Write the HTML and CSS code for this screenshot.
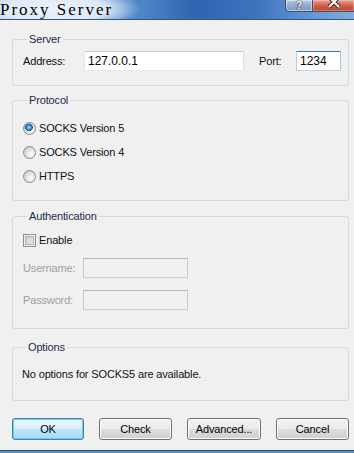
FILE: index.html
```html
<!DOCTYPE html>
<html lang="en">
<head>
    <meta charset="UTF-8">
    <title>Proxy Server</title>
    <link rel="stylesheet" href="styles.css">
</head>
<body>
<div class="window">
    <div class="titlebar">
        <span class="title">Proxy Server</span>
        <div class="caption">
            <span class="cap-btn cap-help">?</span>
            <span class="cap-btn cap-close">
                <svg width="14" height="10" viewBox="0 0 14 10">
                    <path d="M2 -3 L7 2 L12 -3 M2 7 L7 2 L12 7" stroke="#3a1c18" stroke-width="4" fill="none"/>
                    <path d="M2 -3 L7 2 L12 -3 M2 7 L7 2 L12 7" stroke="#fff" stroke-width="2.2" fill="none"/>
                </svg>
            </span>
        </div>
    </div>

    <div class="content">
        <fieldset class="group group-server">
            <legend>Server</legend>
            <div class="row">
                <label class="lbl lbl-address">Address:</label>
                <input class="text text-address" value="127.0.0.1">
                <label class="lbl lbl-port">Port:</label>
                <input class="text text-port" value="1234">
            </div>
        </fieldset>

        <fieldset class="group group-protocol">
            <legend>Protocol</legend>
            <label class="choice"><input type="radio" name="proto" class="radio" checked><span>SOCKS Version 5</span></label>
            <label class="choice"><input type="radio" name="proto" class="radio"><span>SOCKS Version 4</span></label>
            <label class="choice"><input type="radio" name="proto" class="radio"><span>HTTPS</span></label>
        </fieldset>

        <fieldset class="group group-auth">
            <legend>Authentication</legend>
            <label class="choice choice-check"><input type="checkbox" class="check"><span>Enable</span></label>
            <div class="row row-user">
                <label class="lbl lbl-off">Username:</label>
                <input class="text text-off" disabled>
            </div>
            <div class="row row-pass">
                <label class="lbl lbl-off">Password:</label>
                <input class="text text-off" type="password" disabled>
            </div>
        </fieldset>

        <fieldset class="group group-options">
            <legend>Options</legend>
            <p class="note">No options for SOCKS5 are available.</p>
        </fieldset>

        <div class="buttons">
            <button class="btn btn-ok">OK</button>
            <button class="btn btn-check">Check</button>
            <button class="btn btn-adv">Advanced...</button>
            <button class="btn btn-cancel">Cancel</button>
        </div>
    </div>

    <div class="frame-bottom"></div>
</div>
</body>
</html>
```

FILE: styles.css
```css
*{margin: 0;padding: 0;}
body {
    background: #f0f0f0;
    font-family: "Liberation Sans", Arial, sans-serif;
    font-size: 11px;
    letter-spacing: -0.15px;
    color: #111;
}
/*========window========*/
.window {
    width: 354px;
    height: 453px;
    display: flex;
    flex-direction: column;
    background: #f0f0f0;
    overflow: hidden;
}
.titlebar {
    height: 19px;
    border-bottom: 1px solid #33557f;
    display: flex;
    background-image:
        radial-gradient(ellipse 85px 22px at 55px 9px, rgba(236,242,250,1) 0, rgba(226,236,248,.95) 60%, rgba(226,236,248,0) 100%),
        linear-gradient(to right, #a9c6e8 0, #4f86c8 40%, #2f64b0 55%, #3d73bd 72%, #5e92d0 86%, #84addd 100%);
}
.title {
    font-family: "Liberation Serif", "Times New Roman", serif;
    font-size: 17px;
    line-height: 19px;
    letter-spacing: 2px;
    color: #000;
}
.caption {
    margin-left: auto;
    display: flex;
    align-items: flex-start;
}
.cap-btn {
    display: block;
    height: 12px;
    box-sizing: border-box;
    overflow: hidden;
    border: 1px solid #3d4f6e;
    border-top: none;
}
.cap-help {
    width: 28px;
    border-radius: 0 0 0 4px;
    background: linear-gradient(#b8cbe4, #8fa8cb 55%, #7f9bc2);
    box-shadow: inset 0 0 0 1px rgba(255,255,255,.45);
    color: #fff;
    font-weight: bold;
    font-size: 10px;
    line-height: 11px;
    text-align: center;
    text-shadow: 0 0 1px #1d2a40, 0 0 2px #1d2a40;
}
.cap-close {
    width: 41px;
    border-left: none;
    border-right: none;
    background: linear-gradient(#e6a595, #cf5a43 55%, #c0432c);
    box-shadow: inset 0 0 0 1px rgba(255,220,210,.35);
}
.cap-close svg {
    display: block;
    margin: 0 auto;
}
.frame-bottom {
    height: 3px;
    background: linear-gradient(#2a4670 0, #2a4670 1px, #5f8fc6 1px);
}

/*========content========*/
.content {
    flex: 1;
    padding: 12px 5px 0 12px;
}
.group {
    border: 1px solid #d0dae2;
    border-radius: 3px;
    min-width: 0;
}
.group legend {
    margin-left: 4px;
    padding: 0 2px;
    line-height: 14px;
    color: #1b2b4b;
}
.group-server { padding: 5px 0 14px 10px; }
.group-protocol { margin-top: 7px; padding: 9px 0 12px 10px; }
.group-auth { margin-top: 8px; padding: 5px 0 18px 10px; }
.group-options { margin-top: 11px; padding: 13px 0 19px 9px; }

.row {
    display: flex;
    align-items: center;
    height: 20px;
}
.lbl {
    display: block;
}
.lbl-address { width: 61px; }
.lbl-port { width: 37px; margin-left: 15px; }
.lbl-off { width: 60px; color: #a0a0a0; }
.row-user { margin-top: 6px; }
.row-pass { margin-top: 12px; }

.text {
    height: 20px;
    box-sizing: border-box;
    border: 1px solid;
    border-color: #c5c9d0 #dbdfe6 #e3e9ef #e2e3ea;
    background: #fff;
    font-family: "Liberation Sans", Arial, sans-serif;
    font-size: 12px;
    color: #000;
    padding: 0 3px;
    outline: none;
}
.text-address { width: 160px; }
.text-port {
    width: 45px;
    border-color: #3d7bad #a4c9e3 #b7d9ed #b5cfe7;
}
.text-off {
    width: 105px;
    background: #f0f0f0;
    border-color: #b6b6b6 #cacaca #cfcfcf #cacaca;
}

/*========radio & check========*/
.choice {
    display: flex;
    align-items: center;
    height: 24px;
}
.choice span { margin-left: 3px; }
.radio,
.check {
    -webkit-appearance: none;
    appearance: none;
    width: 13px;
    height: 13px;
    margin: 0;
    box-sizing: border-box;
    border: 1px solid #8a8a8a;
    flex: none;
}
.radio {
    border-radius: 50%;
    background: radial-gradient(circle at 65% 65%, #fbfbfb 0, #e4e4e4 45%, #b9b9b9 100%);
}
.radio:checked {
    background:
        radial-gradient(circle at 45% 40%, #c9f0ff 0, #4aa7dc 1.6px, #1a6a9e 3.2px, #0f4c78 3.6px, rgba(15,76,120,0) 4px),
        radial-gradient(circle at 65% 65%, #fbfbfb 0, #e4e4e4 45%, #b9b9b9 100%);
}
.check {
    border-color: #8f8f8f;
    background: linear-gradient(135deg, #c6c6c6, #f2f2f2);
    box-shadow: inset 0 0 0 1px #f4f4f4, inset 0 0 0 2px #b0b0b0;
}

.note {
    line-height: 14px;
}

/*========buttons========*/
.buttons {
    margin-top: 17px;
    display: flex;
    justify-content: space-between;
}
.btn {
    height: 22px;
    border: 1px solid #707070;
    border-radius: 3px;
    background: linear-gradient(#f2f2f2 0, #ebebeb 50%, #dddddd 51%, #cfcfcf 100%);
    box-shadow: inset 0 0 0 1px #fcfcfc;
    font-family: "Liberation Sans", Arial, sans-serif;
    font-size: 11px;
    letter-spacing: -0.15px;
    color: #000;
}
.btn-ok {
    width: 72px;
    border-color: #3c7fb1;
    background: linear-gradient(#eaf6fd 0, #d9f0fc 50%, #bee6fd 51%, #a7d9f5 100%);
    box-shadow: inset 0 0 0 1px #76c9ef;
}
.btn-check { width: 73px; }
.btn-adv { width: 74px; }
.btn-cancel { width: 73px; }
```
